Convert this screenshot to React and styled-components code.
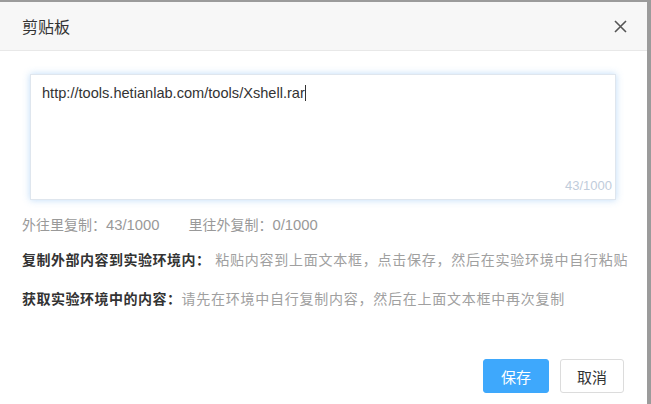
import styled, { createGlobalStyle } from "styled-components";

const GlobalStyle = createGlobalStyle`
  html, body {
    margin: 0;
    padding: 0;
    background: #9b9b9b;
  }
  body {
    font-family: "Liberation Sans", "Noto Sans CJK SC", sans-serif;
    color: #333;
  }
`;

const Page = styled.div`
  width: 651px;
  height: 404px;
  padding: 2px 4px 0 0;
  box-sizing: border-box;
  overflow: hidden;
`;

const Dialog = styled.div`
  width: 647px;
  height: 402px;
  background: #fff;
  display: flex;
  flex-direction: column;
`;

const Header = styled.div`
  height: 48px;
  background: #f7f7f7;
  border-bottom: 1px solid #e8e8e8;
  display: flex;
  align-items: center;
  justify-content: space-between;
  padding: 0 19px 0 22px;
`;

const Title = styled.h3`
  margin: 0;
  font-size: 16px;
  font-weight: normal;
  color: #333;
`;

const Close = styled.button`
  border: 0;
  background: none;
  padding: 0;
  width: 16px;
  height: 16px;
  display: flex;
  align-items: center;
  justify-content: center;
  cursor: pointer;
`;

const Body = styled.div`
  flex: 1;
  padding: 23px 22px 0 22px;
`;

const TextBox = styled.div`
  position: relative;
  margin: 0 9px 0 8px;
  height: 126px;
  box-sizing: border-box;
  border: 1px solid #dfe6ee;
  box-shadow: 0 0 7px rgba(110, 175, 240, 0.45);
  padding: 8px 11px;
  font-size: 14.6px;
  line-height: 20px;
  color: #333;
`;

const Caret = styled.span`
  display: inline-block;
  width: 1px;
  height: 16px;
  background: #333;
  vertical-align: -3px;
`;

const Counter = styled.span`
  position: absolute;
  right: 3px;
  bottom: 3px;
  font-size: 13px;
  color: #bfccdb;
`;

const Stats = styled.div`
  display: flex;
  gap: 29px;
  margin-top: 15px;
  font-size: 14px;
  line-height: 20px;
  color: #999;
`;

const Count = styled.span`
  font-size: 14.8px;
`;

const Tip = styled.p`
  margin: ${(p) => p.$top}px 0 0;
  font-size: 14px;
  line-height: 20px;
  white-space: nowrap;
`;

const TipLabel = styled.b`
  color: #333;
  letter-spacing: 0.5px;
`;

const TipText = styled.span`
  color: #a0a0a0;
  letter-spacing: 0.75px;
`;

const Footer = styled.div`
  display: flex;
  justify-content: flex-end;
  gap: 11px;
  padding: 0 23px 11px 0;
`;

const Button = styled.button`
  width: ${(p) => (p.$primary ? 66 : 64)}px;
  height: 34px;
  box-sizing: border-box;
  border-radius: 3px;
  border: 1px solid ${(p) => (p.$primary ? "#3ea8fc" : "#dcdcdc")};
  background: ${(p) => (p.$primary ? "#3ea8fc" : "#fff")};
  color: ${(p) => (p.$primary ? "#fff" : "#333")};
  font-family: inherit;
  font-size: 15px;
  cursor: pointer;
`;

export default function App() {
  return (
    <Page>
      <GlobalStyle />
      <Dialog>
        <Header>
          <Title>剪贴板</Title>
          <Close aria-label="close">
            <svg width="13" height="13" viewBox="0 0 13 13">
              <path d="M1 1 L12 12 M12 1 L1 12" stroke="#555" strokeWidth="1.6" />
            </svg>
          </Close>
        </Header>
        <Body>
          <TextBox>
            http://tools.hetianlab.com/tools/Xshell.rar<Caret />
            <Counter>43/1000</Counter>
          </TextBox>
          <Stats>
            <span>外往里复制：<Count>43/1000</Count></span>
            <span>里往外复制：<Count>0/1000</Count></span>
          </Stats>
          <Tip $top={15}>
            <TipLabel>复制外部内容到实验环境内：</TipLabel>
            <TipText> 粘贴内容到上面文本框，点击保存，然后在实验环境中自行粘贴</TipText>
          </Tip>
          <Tip $top={19}>
            <TipLabel>获取实验环境中的内容：</TipLabel>
            <TipText>请先在环境中自行复制内容，然后在上面文本框中再次复制</TipText>
          </Tip>
        </Body>
        <Footer>
          <Button $primary>保存</Button>
          <Button>取消</Button>
        </Footer>
      </Dialog>
    </Page>
  );
}
